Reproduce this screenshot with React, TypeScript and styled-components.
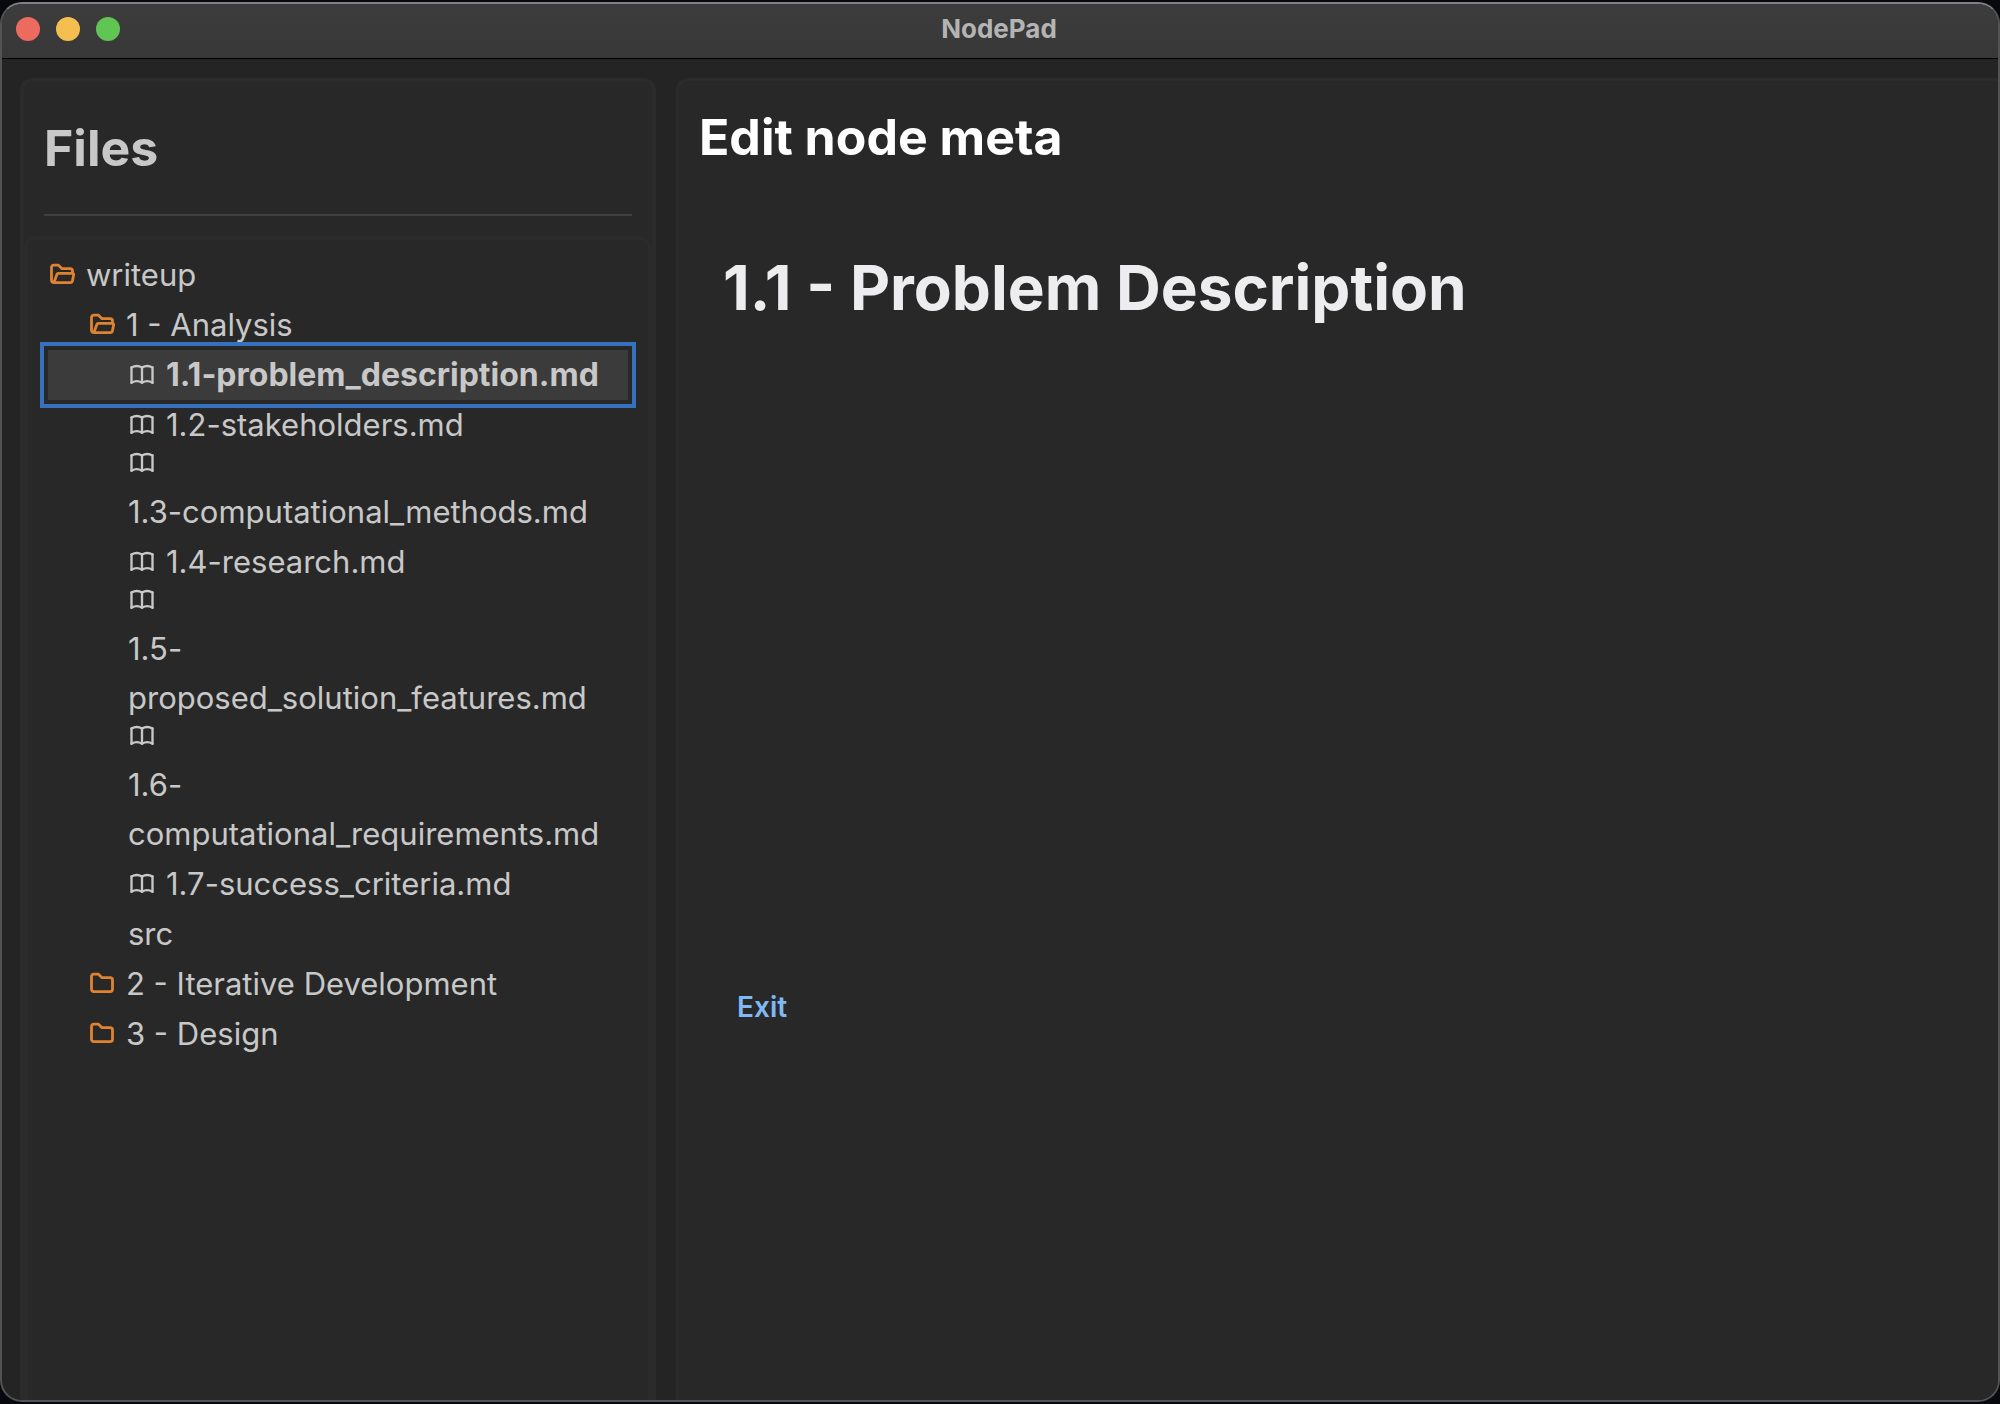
import React, { useState } from "react";
import styled, { createGlobalStyle } from "styled-components";

const GlobalStyle = createGlobalStyle`
  * { box-sizing: border-box; }
  body {
    margin: 0;
    background: #08080f;
    font-family: Inter, "Noto Sans", "Liberation Sans", sans-serif;
    -webkit-font-smoothing: antialiased;
  }
`;

const Window = styled.div`
  display: flex;
  flex-direction: column;
  height: calc(100vh - 4px);
  margin: 2px 0;
  border: 2px solid #535353;
  border-top-color: #808080;
  border-radius: 22px;
  background: #242424;
  overflow: hidden;
`;

const TitleBar = styled.header`
  display: grid;
  grid-template-columns: 1fr auto 1fr;
  align-items: center;
  flex: none;
  height: 55px;
  padding: 0 16px 4px 14px;
  border-bottom: 1px solid #000;
  background: linear-gradient(#3c3c3c, #383838);
`;

const Lights = styled.div`
  display: flex;
  gap: 16px;
`;

const Light = styled.button<{ $color: string }>`
  width: 24px;
  height: 24px;
  padding: 0;
  border: 0;
  border-radius: 50%;
  background: ${(p) => p.$color};
`;

const AppName = styled.span`
  color: #b4b4b4;
  font-size: 26px;
  font-weight: 700;
  line-height: 32px;
`;

const Workspace = styled.div`
  display: flex;
  flex: 1;
  gap: 20px;
  min-height: 0;
  padding: 19px 0 0 18px;
`;

const Sidebar = styled.aside`
  display: flex;
  flex-direction: column;
  flex: none;
  width: 636px;
  border: 4px solid #2b2b2b;
  border-bottom: 0;
  border-radius: 12px 12px 0 0;
  background: #282828;
`;

const SidebarTitle = styled.h2`
  margin: 0 20px 20px;
  padding: 36px 0;
  border-bottom: 2px solid #404040;
  color: #c8c8c8;
  font-size: 50px;
  font-weight: 700;
  line-height: 60px;
`;

const Tree = styled.nav`
  flex: 1;
  padding: 10px 20px;
  border: 4px solid #2b2b2b;
  border-bottom: 0;
  border-radius: 12px 12px 0 0;
`;

const List = styled.ul`
  margin: 0;
  padding: 0;
  list-style: none;
`;

const Row = styled.button<{ $depth: number; $selected: boolean }>`
  display: flex;
  flex-wrap: wrap;
  align-items: flex-end;
  column-gap: 8px;
  width: 100%;
  padding: 0 10px 1px ${(p) => p.$depth * 40}px;
  border: 0;
  background: ${(p) => (p.$selected ? "#3b3b3b" : "transparent")};
  outline: ${(p) => (p.$selected ? "4px solid #3671c0" : "none")};
  outline-offset: 4px;
  color: #c8c8c8;
  font-family: inherit;
  font-size: ${(p) => (p.$selected ? 32 : 31)}px;
  font-weight: ${(p) => (p.$selected ? 700 : 400)};
  line-height: 49px;
  text-align: left;
`;

const IconSlot = styled.span<{ $folder: boolean }>`
  display: flex;
  width: 30px;
  height: 37px;
  color: ${(p) => (p.$folder ? "#e08331" : "#c8c8c8")};
`;

const Glyph = styled.svg`
  width: 28px;
  height: 25px;
  fill: none;
  stroke: currentColor;
  stroke-linecap: round;
  stroke-linejoin: round;
`;

const Editor = styled.main`
  flex: 1;
  min-width: 0;
  padding: 26px 20px;
  border: 3px solid #2b2b2b;
  border-width: 3px 0 0 3px;
  border-radius: 12px 0 0 0;
  background: #282828;
`;

const EditorHeading = styled.h2`
  margin: 0;
  color: #fff;
  font-size: 50px;
  font-weight: 700;
  line-height: 60px;
`;

const NodeForm = styled.section`
  display: flex;
  flex-direction: column;
  align-items: flex-start;
  padding: 83px 24px;
`;

const NodeTitle = styled.h1`
  margin: 0;
  min-height: 737px;
  color: #ededef;
  font-size: 62px;
  font-weight: 700;
  line-height: 76px;
`;

const ExitButton = styled.button`
  padding: 0 14px;
  border: 0;
  background: transparent;
  color: #7fb8f5;
  font-family: inherit;
  font-size: 28px;
  font-weight: 600;
  line-height: 40px;
`;

type IconName = "book" | "folder" | "folderOpen";

const shapes: Record<IconName, string[]> = {
  book: [
    "M3 19a9 9 0 0 1 9 0a9 9 0 0 1 9 0",
    "M3 6a9 9 0 0 1 9 0a9 9 0 0 1 9 0",
    "M3 6v13",
    "M12 6v13",
    "M21 6v13",
  ],
  folder: [
    "M5 4h4l3 3h7a2 2 0 0 1 2 2v8a2 2 0 0 1 -2 2h-14a2 2 0 0 1 -2 -2v-11a2 2 0 0 1 2 -2",
  ],
  folderOpen: [
    "M5 19l2.757 -7.351a1 1 0 0 1 .936 -.649h12.307a1 1 0 0 1 .986 1.164l-.996 5.211a2 2 0 0 1 -1.964 1.625h-14.026a2 2 0 0 1 -2 -2v-11a2 2 0 0 1 2 -2h4l3 3h7a2 2 0 0 1 2 2v2",
  ],
};

function Icon({ name }: { name: IconName }) {
  return (
    <IconSlot $folder={name !== "book"}>
      <Glyph viewBox="0 2 24 20" strokeWidth={name === "book" ? 2 : 2.4} aria-hidden="true">
        {shapes[name].map((d) => (
          <path key={d} d={d} />
        ))}
      </Glyph>
    </IconSlot>
  );
}

interface TreeNode {
  label: string;
  icon?: IconName;
  children?: TreeNode[];
}

const files: TreeNode[] = [
  {
    label: "writeup",
    icon: "folderOpen",
    children: [
      {
        label: "1 - Analysis",
        icon: "folderOpen",
        children: [
          { label: "1.1-problem_description.md", icon: "book" },
          { label: "1.2-stakeholders.md", icon: "book" },
          { label: "1.3-computational_methods.md", icon: "book" },
          { label: "1.4-research.md", icon: "book" },
          { label: "1.5-proposed_solution_features.md", icon: "book" },
          { label: "1.6-computational_requirements.md", icon: "book" },
          { label: "1.7-success_criteria.md", icon: "book" },
          { label: "src" },
        ],
      },
      { label: "2 - Iterative Development", icon: "folder" },
      { label: "3 - Design", icon: "folder" },
    ],
  },
];

interface BranchProps {
  nodes: TreeNode[];
  depth: number;
  selected: string;
  onSelect: (label: string) => void;
}

function Branch({ nodes, depth, selected, onSelect }: BranchProps) {
  return (
    <List>
      {nodes.map((node) => (
        <li key={node.label}>
          <Row
            type="button"
            $depth={depth}
            $selected={node.label === selected}
            onClick={() => onSelect(node.label)}
          >
            {node.icon && <Icon name={node.icon} />}
            <span>{node.label}</span>
          </Row>
          {node.children && (
            <Branch nodes={node.children} depth={depth + 1} selected={selected} onSelect={onSelect} />
          )}
        </li>
      ))}
    </List>
  );
}

export default function App() {
  const [selected, setSelected] = useState("1.1-problem_description.md");
  return (
    <>
      <GlobalStyle />
      <Window>
        <TitleBar>
          <Lights>
            <Light type="button" aria-label="Close" $color="#ed6a5e" />
            <Light type="button" aria-label="Minimize" $color="#f5bf4f" />
            <Light type="button" aria-label="Zoom" $color="#61c554" />
          </Lights>
          <AppName>NodePad</AppName>
        </TitleBar>
        <Workspace>
          <Sidebar>
            <SidebarTitle>Files</SidebarTitle>
            <Tree aria-label="Files">
              <Branch nodes={files} depth={0} selected={selected} onSelect={setSelected} />
            </Tree>
          </Sidebar>
          <Editor>
            <EditorHeading>Edit node meta</EditorHeading>
            <NodeForm>
              <NodeTitle>1.1 - Problem Description</NodeTitle>
              <ExitButton type="button">Exit</ExitButton>
            </NodeForm>
          </Editor>
        </Workspace>
      </Window>
    </>
  );
}
